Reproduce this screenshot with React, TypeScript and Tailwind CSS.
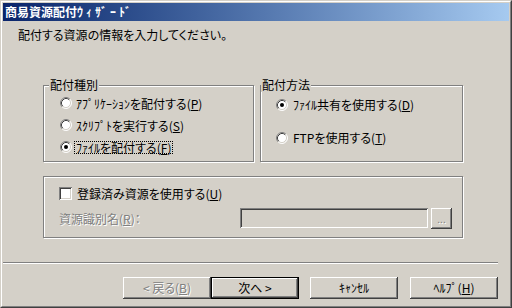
import React from "react";

function Radio({ checked }: { checked?: boolean }) {
  return (
    <svg width="12" height="12" viewBox="0 0 12 12" className="shrink-0">
      <circle cx="6" cy="6" r="5" fill="#fff" />
      <path d="M2.11 9.89A5.5 5.5 0 0 1 9.89 2.11" stroke="#808080" fill="none" />
      <path d="M9.89 2.11A5.5 5.5 0 0 1 2.11 9.89" stroke="#fff" fill="none" />
      <path d="M2.82 9.18A4.5 4.5 0 0 1 9.18 2.82" stroke="#404040" fill="none" />
      <path d="M9.18 2.82A4.5 4.5 0 0 1 2.82 9.18" stroke="#d4d0c8" fill="none" />
      {checked && <circle cx="6" cy="6" r="2" fill="#000" />}
    </svg>
  );
}

function U({ children }: { children: React.ReactNode }) {
  return <span className="underline decoration-1 underline-offset-[1px]">{children}</span>;
}

const raised =
  "shadow-[inset_-1px_-1px_#404040,inset_1px_1px_#fff,inset_-2px_-2px_#808080,inset_2px_2px_#d4d0c8]";
const sunken =
  "shadow-[inset_1px_1px_#808080,inset_-1px_-1px_#fff,inset_2px_2px_#404040,inset_-2px_-2px_#d4d0c8]";
const etched = "border border-[#808080] shadow-[inset_1px_1px_0_#fff,1px_1px_0_#fff]";
const disabledText = "text-[#808080] [text-shadow:1px_1px_0_#fff]";

export default function App() {
  return (
    <div className="w-[512px] h-[308px] overflow-hidden bg-[#d4d0c8] border border-t-[#d4d0c8] border-l-[#d4d0c8] border-r-[#404040] border-b-[#404040] font-['Noto_Sans_CJK_JP','Noto_Sans_CJK_SC',sans-serif] [font-feature-settings:'palt'] text-[12px] leading-[14px] text-black">
      <div className="h-full border border-t-white border-l-white border-r-[#808080] border-b-[#808080] p-px flex flex-col">
        {/* Title bar */}
        <div className="h-[18px] shrink-0 bg-linear-to-r from-[#0a246a] to-[#a6caf0] flex items-center pl-[2px] text-white font-bold [font-feature-settings:normal]">
          <span>商易資源配付</span>
          <span className="tracking-[3px]">ｳｨｻﾞｰﾄﾞ</span>
        </div>

        {/* Header text */}
        <div className="pl-[15px] mt-[7px] h-[14px]">配付する資源の情報を入力してください。</div>

        {/* Group row */}
        <div className="flex mt-[43px] ml-[40px] shrink-0">
          <div className={`relative ${etched} w-[211px] h-[77px] flex flex-col pt-[6px] pl-[16px]`}>
            <span className="absolute left-[5px] -top-[8px] bg-[#d4d0c8] px-[1px] leading-[14px]">配付種別</span>
            <div className="h-[22px] flex items-center gap-[3px]">
              <Radio />
              <span className="border border-transparent leading-[11px]">
                ｱﾌﾟﾘｹｰｼｮﾝを配付する(<U>P</U>)
              </span>
            </div>
            <div className="h-[22px] flex items-center gap-[3px]">
              <Radio />
              <span className="border border-transparent leading-[11px]">
                ｽｸﾘﾌﾟﾄを実行する(<U>S</U>)
              </span>
            </div>
            <div className="h-[22px] flex items-center gap-[3px]">
              <Radio checked />
              <span className="border border-dotted border-black px-[1px] -ml-[1px] leading-[11px]">
                ﾌｧｲﾙを配付する(<U>F</U>)
              </span>
            </div>
          </div>

          <div className={`relative ${etched} ml-[6px] w-[203px] h-[77px] flex flex-col pt-[8px] pl-[15px] gap-[11px]`}>
            <span className="absolute left-0 -top-[8px] bg-[#d4d0c8] px-[1px] leading-[14px]">配付方法</span>
            <div className="h-[22px] flex items-center gap-[5px]">
              <Radio checked />
              <span>
                ﾌｧｲﾙ共有を使用する(<U>D</U>)
              </span>
            </div>
            <div className="h-[22px] flex items-center gap-[5px]">
              <Radio />
              <span>
                FTPを使用する(<U>T</U>)
              </span>
            </div>
          </div>
        </div>

        {/* Group 3 */}
        <div className={`${etched} mt-[14px] ml-[40px] w-[420px] h-[62px] shrink-0 flex flex-col pt-[10px] pl-[15px] pr-[10px]`}>
          <div className="h-[13px] flex items-center gap-[5px]">
            <div className={`w-[13px] h-[13px] bg-white ${sunken}`} />
            <span>
              登録済み資源を使用する(<U>U</U>)
            </span>
          </div>
          <div className="mt-[8px] h-[21px] flex items-center">
            <span className={disabledText}>
              資源識別名(<U>R</U>)：
            </span>
            <div className="ml-auto flex items-start gap-[3px]">
              <div className={`w-[188px] h-[20px] bg-[#d4d0c8] ${sunken}`} />
              <div className={`w-[21px] h-[21px] flex items-center justify-center ${raised} ${disabledText} text-[10px] leading-[10px]`}>
                ...
              </div>
            </div>
          </div>
        </div>

        {/* Separator */}
        <div className="mt-[24px] w-[495px] h-[2px] shrink-0 border-t border-t-[#808080] border-b border-b-white" />

        {/* Buttons */}
        <div className="flex mt-[13px] ml-[120px] shrink-0">
          <div className={`w-[88px] h-[22px] flex items-center justify-center ${raised} ${disabledText}`}>
            &lt; 戻る(<U>B</U>)
          </div>
          <div className="w-[88px] h-[22px] border border-black">
            <div className={`w-full h-full flex items-center justify-center ${raised}`}>次へ &gt;</div>
          </div>
          <div className={`ml-[11px] w-[88px] h-[22px] flex items-center justify-center ${raised}`}>ｷｬﾝｾﾙ</div>
          <div className={`ml-[12px] w-[88px] h-[22px] flex items-center justify-center ${raised}`}>
            ﾍﾙﾌﾟ(<U>H</U>)
          </div>
        </div>
      </div>
    </div>
  );
}
